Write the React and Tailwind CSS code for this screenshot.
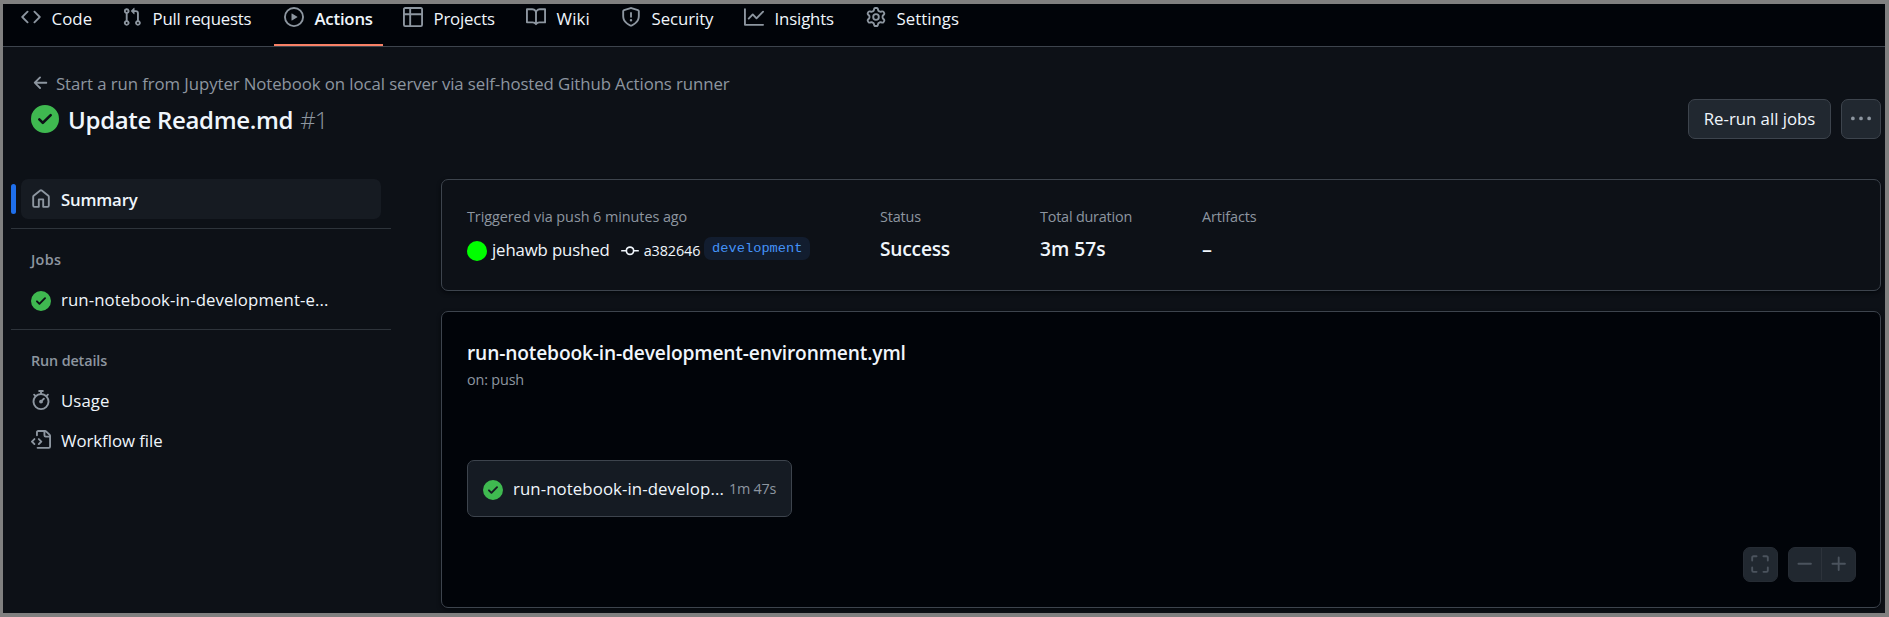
const PATHS = {
  code: "m11.28 3.22 4.25 4.25a.75.75 0 0 1 0 1.06l-4.25 4.25a.749.749 0 0 1-1.275-.326.749.749 0 0 1 .215-.734L13.94 8l-3.72-3.72a.749.749 0 0 1 .326-1.275.749.749 0 0 1 .734.215Zm-6.56 0a.751.751 0 0 1 1.042.018.751.751 0 0 1 .018 1.042L2.06 8l3.72 3.72a.749.749 0 0 1-.326 1.275.749.749 0 0 1-.734-.215L.47 8.53a.75.75 0 0 1 0-1.06Z",
  pull: "M1.5 3.25a2.25 2.25 0 1 1 3 2.122v5.256a2.251 2.251 0 1 1-1.5 0V5.372A2.25 2.25 0 0 1 1.5 3.25Zm5.677-.177L9.573.677A.25.25 0 0 1 10 .854V2.5h1A2.5 2.5 0 0 1 13.5 5v5.628a2.251 2.251 0 1 1-1.5 0V5a1 1 0 0 0-1-1h-1v1.646a.25.25 0 0 1-.427.177L7.177 3.427a.25.25 0 0 1 0-.354ZM3.75 2.5a.75.75 0 1 0 0 1.5.75.75 0 0 0 0-1.5Zm0 9.5a.75.75 0 1 0 0 1.5.75.75 0 0 0 0-1.5Zm8.25.75a.75.75 0 1 0 1.5 0 .75.75 0 0 0-1.5 0Z",
  play: "M8 0a8 8 0 1 1 0 16A8 8 0 0 1 8 0ZM1.5 8a6.5 6.5 0 1 0 13 0 6.5 6.5 0 0 0-13 0Zm4.879-2.773 4.264 2.559a.25.25 0 0 1 0 .428l-4.264 2.559A.25.25 0 0 1 6 10.559V5.442a.25.25 0 0 1 .379-.215Z",
  table: "M0 1.75C0 .784.784 0 1.75 0h12.5C15.216 0 16 .784 16 1.75v12.5A1.75 1.75 0 0 1 14.25 16H1.75A1.75 1.75 0 0 1 0 14.25ZM6.5 6.5v8h7.75a.25.25 0 0 0 .25-.25V6.5Zm8-1.5V1.75a.25.25 0 0 0-.25-.25H6.5V5Zm-13 1.5v7.75c0 .138.112.25.25.25H5v-8ZM5 5V1.5H1.75a.25.25 0 0 0-.25.25V5Z",
  book: "M0 1.75A.75.75 0 0 1 .75 1h4.253c1.227 0 2.317.59 3 1.501A3.743 3.743 0 0 1 11.006 1h4.245a.75.75 0 0 1 .75.75v10.5a.75.75 0 0 1-.75.75h-4.507a2.25 2.25 0 0 0-1.591.659l-.622.621a.75.75 0 0 1-1.06 0l-.622-.621A2.25 2.25 0 0 0 5.258 13H.75a.75.75 0 0 1-.75-.75Zm7.251 10.324.004-5.073-.002-2.253A2.25 2.25 0 0 0 5.003 2.5H1.5v9h3.757a3.75 3.75 0 0 1 1.994.574ZM8.755 4.75l-.004 7.322a3.752 3.752 0 0 1 1.992-.572H14.5v-9h-3.495a2.25 2.25 0 0 0-2.25 2.25Z",
  shield: "M7.467.133a1.748 1.748 0 0 1 1.066 0l5.25 1.68A1.75 1.75 0 0 1 15 3.48V7c0 1.566-.32 3.182-1.303 4.682-.983 1.498-2.585 2.813-5.032 3.855a1.697 1.697 0 0 1-1.33 0c-2.447-1.042-4.049-2.357-5.032-3.855C1.32 10.182 1 8.566 1 7V3.48a1.75 1.75 0 0 1 1.217-1.667Zm.61 1.429a.25.25 0 0 0-.153 0l-5.25 1.68a.25.25 0 0 0-.174.238V7c0 1.358.275 2.666 1.057 3.86.784 1.194 2.121 2.34 4.366 3.297a.196.196 0 0 0 .154 0c2.245-.956 3.582-2.104 4.366-3.298C13.225 9.666 13.5 8.36 13.5 7V3.48a.251.251 0 0 0-.174-.237l-5.25-1.68ZM8.75 4.75v3a.75.75 0 0 1-1.5 0v-3a.75.75 0 0 1 1.5 0ZM9 10.5a1 1 0 1 1-2 0 1 1 0 0 1 2 0Z",
  graph: "M1.5 1.75V13.5h13.75a.75.75 0 0 1 0 1.5H.75a.75.75 0 0 1-.75-.75V1.75a.75.75 0 0 1 1.5 0Zm14.28 2.53-5.25 5.25a.75.75 0 0 1-1.06 0L7 7.06 4.28 9.78a.751.751 0 0 1-1.042-.018.751.751 0 0 1-.018-1.042l3.25-3.25a.75.75 0 0 1 1.06 0L10 7.94l4.72-4.72a.751.751 0 0 1 1.042.018.751.751 0 0 1 .018 1.042Z",
  gear: "M8 0a8.2 8.2 0 0 1 .701.031C9.444.095 9.99.645 10.16 1.29l.288 1.107c.018.066.079.158.212.224.231.114.454.243.668.386.123.082.233.09.299.071l1.103-.303c.644-.176 1.392.021 1.82.63.27.385.506.792.704 1.218.315.675.111 1.422-.364 1.891l-.814.806c-.049.048-.098.147-.088.294.016.257.016.515 0 .772-.01.147.038.246.088.294l.814.806c.475.469.679 1.216.364 1.891a7.977 7.977 0 0 1-.704 1.217c-.428.61-1.176.807-1.82.63l-1.102-.302c-.067-.019-.177-.011-.3.071a5.909 5.909 0 0 1-.668.386c-.133.066-.194.158-.211.224l-.29 1.106c-.168.646-.715 1.196-1.458 1.26a8.006 8.006 0 0 1-1.402 0c-.743-.064-1.289-.614-1.458-1.26l-.289-1.106c-.018-.066-.079-.158-.212-.224a5.738 5.738 0 0 1-.668-.386c-.123-.082-.233-.09-.299-.071l-1.103.303c-.644.176-1.392-.021-1.82-.63a8.12 8.12 0 0 1-.704-1.218c-.315-.675-.111-1.422.363-1.891l.815-.806c.05-.048.098-.147.088-.294a6.214 6.214 0 0 1 0-.772c.01-.147-.038-.246-.088-.294l-.815-.806C.635 6.045.431 5.298.746 4.623a7.92 7.92 0 0 1 .704-1.217c.428-.61 1.176-.807 1.82-.63l1.102.302c.067.019.177.011.3-.071.214-.143.437-.272.668-.386.133-.066.194-.158.211-.224l.29-1.106C6.009.645 6.556.095 7.299.03 7.53.01 7.764 0 8 0Zm-.571 1.525c-.036.003-.108.036-.137.146l-.289 1.105c-.147.561-.549.967-.998 1.189-.173.086-.34.183-.5.29-.417.278-.97.423-1.529.27l-1.103-.303c-.109-.03-.175.016-.195.045-.22.312-.412.644-.573.99-.014.031-.021.11.059.19l.815.806c.411.406.562.957.53 1.456a4.709 4.709 0 0 0 0 .582c.032.499-.119 1.05-.53 1.456l-.815.806c-.081.08-.073.159-.059.19.162.346.353.677.573.989.02.03.085.076.195.046l1.102-.303c.56-.153 1.113-.008 1.53.27.161.107.328.204.501.29.447.222.85.629.997 1.189l.289 1.105c.029.109.101.143.137.146a6.6 6.6 0 0 0 1.142 0c.036-.003.108-.036.137-.146l.289-1.105c.147-.561.549-.967.998-1.189.173-.086.34-.183.5-.29.417-.278.97-.423 1.529-.27l1.103.303c.109.029.175-.016.195-.045.22-.313.411-.644.573-.99.014-.031.021-.11-.059-.19l-.815-.806c-.411-.406-.562-.957-.53-1.456a4.709 4.709 0 0 0 0-.582c-.032-.499.119-1.05.53-1.456l.815-.806c.081-.08.073-.159.059-.19a6.464 6.464 0 0 0-.573-.989c-.02-.03-.085-.076-.195-.046l-1.102.303c-.56.153-1.113.008-1.53-.27a4.44 4.44 0 0 0-.501-.29c-.447-.222-.85-.629-.997-1.189l-.289-1.105c-.029-.11-.101-.143-.137-.146a6.6 6.6 0 0 0-1.142 0ZM11 8a3 3 0 1 1-6 0 3 3 0 0 1 6 0ZM9.5 8a1.5 1.5 0 1 0-3.001.001A1.5 1.5 0 0 0 9.5 8Z",
  home: "M6.906.664a1.749 1.749 0 0 1 2.187 0l5.25 4.2c.415.332.657.835.657 1.367v7.019A1.75 1.75 0 0 1 13.25 15h-3.5a.75.75 0 0 1-.75-.75V9H7v5.25a.75.75 0 0 1-.75.75h-3.5A1.75 1.75 0 0 1 1 13.25V6.23c0-.531.242-1.034.657-1.366l5.25-4.2Zm1.25 1.171a.25.25 0 0 0-.312 0l-5.25 4.2a.25.25 0 0 0-.094.196v7.019c0 .138.112.25.25.25H5.5V8.25a.75.75 0 0 1 .75-.75h3.5a.75.75 0 0 1 .75.75v5.25h2.75a.25.25 0 0 0 .25-.25V6.23a.25.25 0 0 0-.094-.195Z",
  stopwatch: "M5.75.75A.75.75 0 0 1 6.5 0h3a.75.75 0 0 1 0 1.5h-.75v1l-.001.041a6.724 6.724 0 0 1 3.464 1.435l.007-.006.75-.75a.749.749 0 0 1 1.275.326.749.749 0 0 1-.215.734l-.75.75-.006.007a6.75 6.75 0 1 1-10.548 0L2.72 5.03l-.75-.75a.751.751 0 0 1 .018-1.042.751.751 0 0 1 1.042-.018l.75.75.007.006A6.72 6.72 0 0 1 7.25 2.541V1.5H6.5a.75.75 0 0 1-.75-.75ZM8 14.5a5.25 5.25 0 1 0-.001-10.501A5.25 5.25 0 0 0 8 14.5Zm.389-6.7 1.33-1.33a.75.75 0 1 1 1.061 1.06L9.45 8.861A1.503 1.503 0 0 1 8 10.75a1.499 1.499 0 1 1 .389-2.95Z",
  fileCode: "M4 1.75C4 .784 4.784 0 5.75 0h5.586c.464 0 .909.184 1.237.513l2.914 2.914c.329.328.513.773.513 1.237v8.586A1.75 1.75 0 0 1 14.25 15h-9a.75.75 0 0 1 0-1.5h9a.25.25 0 0 0 .25-.25V6h-2.75A1.75 1.75 0 0 1 10 4.25V1.5H5.75a.25.25 0 0 0-.25.25v2.5a.75.75 0 0 1-1.5 0Zm1.72 4.97a.75.75 0 0 1 1.06 0l2 2a.75.75 0 0 1 0 1.06l-2 2a.749.749 0 0 1-1.275-.326.749.749 0 0 1 .215-.734l1.47-1.47-1.47-1.47a.75.75 0 0 1 0-1.06ZM3.28 7.78 1.81 9.25l1.47 1.47a.751.751 0 0 1-.018 1.042.751.751 0 0 1-1.042.018l-2-2a.75.75 0 0 1 0-1.06l2-2a.751.751 0 0 1 1.042.018.751.751 0 0 1 .018 1.042Zm8.22-6.218V4.25c0 .138.112.25.25.25h2.688l-.011-.013-2.914-2.914-.013-.011Z",
  check: "M8 16A8 8 0 1 1 8 0a8 8 0 0 1 0 16Zm3.78-9.72a.751.751 0 0 0-.018-1.042.751.751 0 0 0-1.042-.018L6.75 9.19 5.28 7.72a.751.751 0 0 0-1.042.018.751.751 0 0 0-.018 1.042l2 2a.75.75 0 0 0 1.06 0Z",
  arrowLeft: "M7.78 12.53a.75.75 0 0 1-1.06 0L2.47 8.28a.75.75 0 0 1 0-1.06l4.25-4.25a.751.751 0 0 1 1.042.018.751.751 0 0 1 .018 1.042L4.81 7h7.44a.75.75 0 0 1 0 1.5H4.81l2.97 2.97a.75.75 0 0 1 0 1.06Z",
  kebab: "M8 9a1.5 1.5 0 1 0 0-3 1.5 1.5 0 0 0 0 3ZM1.5 9a1.5 1.5 0 1 0 0-3 1.5 1.5 0 0 0 0 3Zm13 0a1.5 1.5 0 1 0 0-3 1.5 1.5 0 0 0 0 3Z",
  commit: "M11.93 8.5a4.002 4.002 0 0 1-7.86 0H.75a.75.75 0 0 1 0-1.5h3.32a4.002 4.002 0 0 1 7.86 0h3.32a.75.75 0 0 1 0 1.5Zm-1.43-.75a2.5 2.5 0 1 0-5 0 2.5 2.5 0 0 0 5 0Z",
  screenFull: "M2.75 2.5a.25.25 0 0 0-.25.25v2.5a.75.75 0 0 1-1.5 0v-2.5C1 1.784 1.784 1 2.75 1h2.5a.75.75 0 0 1 0 1.5ZM10 1.75a.75.75 0 0 1 .75-.75h2.5c.966 0 1.75.784 1.75 1.75v2.5a.75.75 0 0 1-1.5 0v-2.5a.25.25 0 0 0-.25-.25h-2.5a.75.75 0 0 1-.75-.75ZM1.75 10a.75.75 0 0 1 .75.75v2.5c0 .138.112.25.25.25h2.5a.75.75 0 0 1 0 1.5h-2.5A1.75 1.75 0 0 1 1 13.25v-2.5a.75.75 0 0 1 .75-.75Zm12.5 0a.75.75 0 0 1 .75.75v2.5A1.75 1.75 0 0 1 13.25 15h-2.5a.75.75 0 0 1 0-1.5h2.5a.25.25 0 0 0 .25-.25v-2.5a.75.75 0 0 1 .75-.75Z",
  dash: "M2 7.75A.75.75 0 0 1 2.75 7h10a.75.75 0 0 1 0 1.5h-10A.75.75 0 0 1 2 7.75Z",
  plus: "M7.75 2a.75.75 0 0 1 .75.75V7h4.25a.75.75 0 0 1 0 1.5H8.5v4.25a.75.75 0 0 1-1.5 0V8.5H2.75a.75.75 0 0 1 0-1.5H7V2.75A.75.75 0 0 1 7.75 2Z",
};

function Icon({ name, className = "size-5 text-[#8d96a0]" }) {
  return (
    <svg viewBox="0 0 16 16" fill="currentColor" aria-hidden="true" className={`shrink-0 ${className}`}>
      <path d={PATHS[name]} />
    </svg>
  );
}

const TABS = [
  { icon: "code", label: "Code", width: "w-[91px]", tracking: "tracking-[0.08px]" },
  { icon: "pull", label: "Pull requests", width: "w-[152px]", tracking: "tracking-[-0.2px]" },
  { icon: "play", label: "Actions", width: "w-[109px]", tracking: "tracking-[-0.22px]", active: true },
  { icon: "table", label: "Projects", width: "w-[113px]", tracking: "tracking-[-0.17px]" },
  { icon: "book", label: "Wiki", width: "w-[85px]", tracking: "tracking-[0.15px]" },
  { icon: "shield", label: "Security", width: "w-[113px]", tracking: "tracking-[-0.07px]" },
  { icon: "graph", label: "Insights", width: "w-[112px]", tracking: "tracking-[-0.14px]" },
  { icon: "gear", label: "Settings", width: "w-[115px]", tracking: "tracking-[0.03px]" },
];

function RepoNav() {
  return (
    <nav className="flex h-[43px] shrink-0 gap-2.5 border-b border-[#3d444d] bg-[#010409] pl-2">
      {TABS.map((tab) => (
        <a
          key={tab.label}
          className={`flex h-[42px] shrink-0 items-start gap-[10.5px] border-b-2 pl-2.5 ${tab.width} ${
            tab.active ? "border-[#f78166] font-semibold" : "border-transparent"
          }`}
        >
          <Icon name={tab.icon} className="mt-[3px] size-5 text-[#8d96a0]" />
          <span className={`leading-[29px] ${tab.tracking}`}>{tab.label}</span>
        </a>
      ))}
    </nav>
  );
}

function RunHeader() {
  return (
    <header className="pt-[23px]">
      <a className="ml-7 flex h-[27px] items-start gap-[5px] text-[#8d96a0]">
        <Icon name="arrowLeft" className="mt-[3px] size-5" />
        <span className="leading-[27px] tracking-[-0.08px]">
          Start a run from Jupyter Notebook on local server via self-hosted Github Actions runner
        </span>
      </a>
      <div className="mt-0.5 flex h-10 items-center pr-1 pl-7">
        <Icon name="check" className="size-7 text-[#3fb950]" />
        <h1 className="ml-[9px] flex gap-[7px] text-[24px] leading-[41px]">
          <span className="font-semibold tracking-[-0.32px]">Update Readme.md</span>
          <span className="font-light tracking-[-1px] text-[#8d96a0]">#1</span>
        </h1>
        <div className="ml-auto flex gap-2.5">
          <button className="h-10 w-[143px] rounded-[7px] border border-[#3d444d] bg-[#212830] leading-[38px] tracking-[-0.02px]">
            Re-run all jobs
          </button>
          <button className="flex size-10 items-center justify-center rounded-[7px] border border-[#3d444d] bg-[#212830]">
            <Icon name="kebab" />
          </button>
        </div>
      </div>
    </header>
  );
}

function Divider({ className }) {
  return <div className={`h-px bg-[#2e343b] ${className}`} />;
}

function SideItem({ icon, iconClass, children, className = "" }) {
  return (
    <a className="flex h-10 items-center gap-2.5 pl-5">
      <Icon name={icon} className={iconClass} />
      <span className={className}>{children}</span>
    </a>
  );
}

function Sidebar() {
  return (
    <aside className="w-[380px] shrink-0">
      <div className="flex items-center gap-[5px]">
        <div className="h-[30px] w-[5px] rounded-[3px] bg-[#1f6feb]" />
        <a className="flex h-10 w-[360px] items-center gap-2.5 rounded-[7px] bg-[#161b22] pl-2.5">
          <Icon name="home" />
          <span className="leading-[41px] font-semibold tracking-[-0.2px]">Summary</span>
        </a>
      </div>
      <Divider className="mt-[9px]" />
      <h2 className="mt-5 pl-5 text-[14.4px] leading-[21px] font-semibold tracking-[0.3px] text-[#8d96a0]">Jobs</h2>
      <div className="mt-[11px]">
        <SideItem icon="check" iconClass="size-5 text-[#3fb950]" className="pb-[3px] tracking-[0.09px]">
          run-notebook-in-development-e...
        </SideItem>
      </div>
      <Divider className="mt-2" />
      <h2 className="mt-5 pl-5 text-[14.4px] leading-[21px] font-semibold tracking-[-0.14px] text-[#8d96a0]">
        Run details
      </h2>
      <div className="mt-[9px]">
        <SideItem icon="stopwatch" iconClass="size-5 text-[#8d96a0]" className="pt-[2px] tracking-[0.1px]">
          Usage
        </SideItem>
        <SideItem icon="fileCode" iconClass="size-5 text-[#8d96a0]" className="pt-[2px] tracking-[-0.04px]">
          Workflow file
        </SideItem>
      </div>
    </aside>
  );
}

function Stat({ label, labelClass, className, children }) {
  return (
    <div className={`shrink-0 ${className}`}>
      <div className={`text-[14.4px] leading-[21px] text-[#8d96a0] ${labelClass}`}>{label}</div>
      <div className="mt-2 flex h-[30px] items-start">{children}</div>
    </div>
  );
}

function RunSummary() {
  return (
    <section className="flex h-28 rounded-[7px] border border-[#3d444d] pt-[26px] pl-[25px] shadow-[0_2px_4px_rgba(1,4,9,0.7)]">
      <Stat label="Triggered via push 6 minutes ago" labelClass="tracking-[-0.06px]" className="w-[413px]">
        <span className="mt-1.5 size-5 rounded-full bg-[#00ff00]" />
        <span className="ml-[5px] leading-[30px] tracking-[-0.14px]">jehawb pushed</span>
        <Icon name="commit" className="mt-[7px] ml-[11px] size-[18px] text-[#f0f6fc]" />
        <span className="ml-[5px] text-[14.4px] leading-[32px] tracking-[-0.1px]">a382646</span>
        <span className="mt-0.5 ml-1 h-[23px] w-[106px] rounded-[7px] bg-[#121d2f] text-center font-['Liberation_Mono',monospace] text-[13.7px] leading-[23px] text-[#4493f8]">
          development
        </span>
      </Stat>
      <Stat label="Status" labelClass="tracking-[-0.14px]" className="w-[160px]">
        <span className="text-[19.2px] leading-[28px] font-semibold tracking-[-0.22px]">Success</span>
      </Stat>
      <Stat label="Total duration" labelClass="tracking-[-0.2px]" className="w-[162px]">
        <span className="text-[19.2px] leading-[28px] font-semibold tracking-[0.02px]">3m 57s</span>
      </Stat>
      <Stat label="Artifacts" labelClass="tracking-[-0.1px]" className="w-[162px]">
        <span className="text-[20px] leading-[28px] font-semibold">–</span>
      </Stat>
    </section>
  );
}

function WorkflowGraph() {
  return (
    <section className="mt-5 h-[297px] rounded-[7px] border border-[#3d444d] bg-[#010409] pt-[26px] pr-6 pl-[25px] shadow-[0_2px_4px_rgba(1,4,9,0.7)]">
      <h2 className="text-[19.2px] leading-[30px] font-semibold tracking-[-0.16px]">
        run-notebook-in-development-environment.yml
      </h2>
      <p className="mt-px text-[14.4px] leading-[21px] tracking-[-0.16px] text-[#8d96a0]">on: push</p>
      <a className="mt-[70px] flex h-[57px] w-[325px] items-center rounded-[7px] border border-[#3d444d] bg-[#151b23] pl-[15px]">
        <Icon name="check" className="mb-[-3px] size-5 text-[#3fb950]" />
        <span className="ml-2.5 w-[216px] tracking-[0.09px]">run-notebook-in-develop...</span>
        <span className="text-[14.4px] tracking-[-0.27px] text-[#8d96a0]">1m 47s</span>
      </a>
      <div className="mt-[30px] flex justify-end gap-2.5">
        <button className="flex size-[35px] items-center justify-center rounded-[7px] border border-[#262c34] bg-[#212830] pr-px pb-px">
          <Icon name="screenFull" className="size-5 text-[#4b535d]" />
        </button>
        <div className="flex h-[35px] w-[68px] rounded-[7px] border border-[#262c34] bg-[#212830] pb-px">
          <button className="flex w-[33px] items-center justify-center border-r border-[#2d333b]">
            <Icon name="dash" className="size-5 text-[#4b535d]" />
          </button>
          <button className="flex flex-1 items-center justify-center">
            <Icon name="plus" className="size-5 text-[#4b535d]" />
          </button>
        </div>
      </div>
    </section>
  );
}

export default function App() {
  return (
    <div className="flex h-[617px] w-[1889px] flex-col overflow-hidden border-4 border-l-3 border-[#808080] bg-[#0d1117] font-['Open_Sans','Noto_Sans',sans-serif] text-[16.8px] whitespace-nowrap text-[#f0f6fc]">
      <RepoNav />
      <RunHeader />
      <div className="mt-10 flex gap-[50px] pr-1 pl-2">
        <Sidebar />
        <main className="flex-1">
          <RunSummary />
          <WorkflowGraph />
        </main>
      </div>
    </div>
  );
}
